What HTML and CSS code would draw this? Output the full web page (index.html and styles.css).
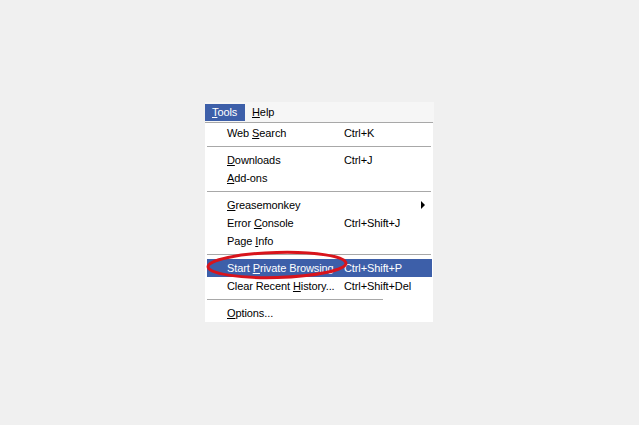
FILE: index.html
```html
<!DOCTYPE html>
<html>
<head>
<meta charset="utf-8">
<link rel="stylesheet" href="styles.css">
</head>
<body>
<div class="menu">
  <div class="bar">
    <span class="top active"><u>T</u>ools</span>
    <span class="top"><u>H</u>elp</span>
  </div>
  <div class="drop">
    <div class="row"><span class="lbl">Web <u>S</u>earch</span><span class="key">Ctrl+K</span></div>
    <div class="sep"></div>
    <div class="row"><span class="lbl"><u>D</u>ownloads</span><span class="key">Ctrl+J</span></div>
    <div class="row"><span class="lbl"><u>A</u>dd-ons</span><span class="key"></span></div>
    <div class="sep"></div>
    <div class="row"><span class="lbl"><u>G</u>reasemonkey</span><span class="key"></span><span class="arrow"></span></div>
    <div class="row"><span class="lbl">Error <u>C</u>onsole</span><span class="key">Ctrl+Shift+J</span></div>
    <div class="row"><span class="lbl">Page <u>I</u>nfo</span><span class="key"></span></div>
    <div class="sep"></div>
    <div class="row sel"><span class="lbl">Start <u>P</u>rivate Browsing</span><span class="key">Ctrl+Shift+P</span></div>
    <div class="row"><span class="lbl">Clear Recent <u>H</u>istory...</span><span class="key">Ctrl+Shift+Del</span></div>
    <div class="sep short"></div>
    <div class="row"><span class="lbl"><u>O</u>ptions...</span><span class="key"></span></div>
    <svg class="ring" width="150" height="34" viewBox="0 0 150 34">
      <ellipse cx="72" cy="15" rx="69" ry="12.5" fill="none" stroke="#d8141c" stroke-width="3" transform="rotate(-1.5 72 15)"/>
    </svg>
  </div>
</div>
</body>
</html>
```
FILE: styles.css
```css
html, body {
  margin: 0;
  padding: 0;
  background: #f0f0f0;
}
body {
  padding: 102px 0 0 205px;
  font-family: "Liberation Sans", Arial, sans-serif;
  font-size: 11px;
  letter-spacing: -0.1px;
  color: #000;
}
.menu {
  width: 229px;
}
.bar {
  height: 20px;
  background: #f6f6f6;
  display: flex;
  align-items: center;
}
.top {
  height: 17px;
  line-height: 17px;
  padding: 0 7px;
  margin-top: 1px;
}
.top.active {
  background: #3d5fa9;
  color: #fff;
  width: 26px;
}
.drop {
  position: relative;
  width: 228px;
  background: #fff;
  border-top: 1px solid #a8a8a8;
  padding-top: 1px;
  height: 200px;
  box-sizing: border-box;
}
.row {
  position: relative;
  display: flex;
  height: 18px;
  line-height: 18px;
  margin: 0 1px 0 2px;
  padding-left: 20px;
  white-space: nowrap;
}
.lbl {
  width: 117px;
}
.key {
  flex: 1;
}
.row.sel {
  background: #3d5fa9;
  color: #fff;
}
.arrow {
  position: absolute;
  right: 7px;
  top: 5px;
  width: 0;
  height: 0;
  border-top: 4px solid transparent;
  border-bottom: 4px solid transparent;
  border-left: 4px solid #000;
}
.sep {
  height: 9px;
  margin: 0 2px 0 2px;
  box-sizing: border-box;
  border-bottom: 1px solid transparent;
  background: linear-gradient(#a8a8a8, #a8a8a8) 0 4px / 100% 1px no-repeat;
}
.sep.short {
  margin-right: 50px;
}
.ring {
  position: absolute;
  left: 0;
  top: 127px;
}
```
